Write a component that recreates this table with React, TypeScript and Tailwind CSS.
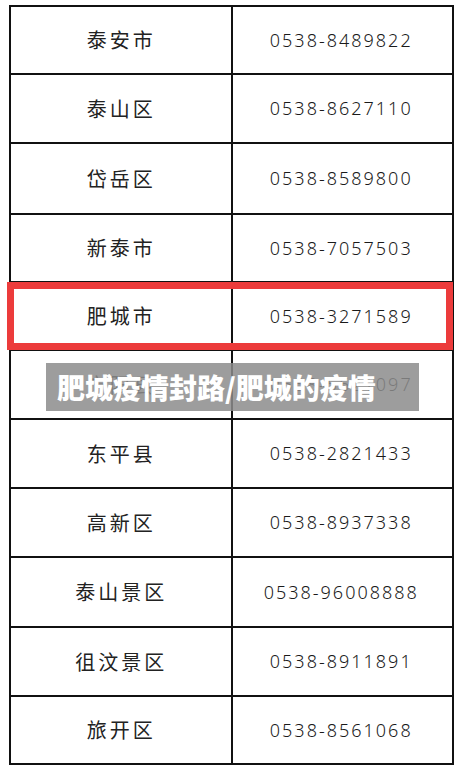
const rows: { name: string; phone: string; h: string }[] = [
  { name: '泰安市', phone: '0538-8489822', h: 'h-[68px]' },
  { name: '泰山区', phone: '0538-8627110', h: 'h-[69px]' },
  { name: '岱岳区', phone: '0538-8589800', h: 'h-[71px]' },
  { name: '新泰市', phone: '0538-7057503', h: 'h-[68px]' },
  { name: '肥城市', phone: '0538-3271589', h: 'h-[68px]' },
  { name: '宁阳县', phone: '0538-5621097', h: 'h-[69px]' },
  { name: '东平县', phone: '0538-2821433', h: 'h-[69px]' },
  { name: '高新区', phone: '0538-8937338', h: 'h-[69px]' },
  { name: '泰山景区', phone: '0538-96008888', h: 'h-[70px]' },
  { name: '徂汶景区', phone: '0538-8911891', h: 'h-[69px]' },
  { name: '旅开区', phone: '0538-8561068', h: 'h-[68px]' },
];

export default function App() {
  return (
    <div className="relative w-[466px] h-[774px] bg-white overflow-hidden font-['Noto_Sans_CJK_SC',sans-serif] text-[#222]">
      <div className="pt-[5px] pl-[9px]">
        <table className="w-[445px] border-collapse border-2 border-[#111] table-fixed">
          <tbody>
            {rows.map(r => (
              <tr key={r.name} className={r.h}>
                <td className="w-1/2 border-2 border-[#111] text-center text-[20px] tracking-[3px] pl-[1px]">{r.name}</td>
                <td className="w-1/2 border-2 border-[#111] text-center text-[18px] tracking-[2px] font-light pr-[2px] text-[#1a1a1a] font-['Noto_Sans','Noto_Sans_CJK_SC',sans-serif]">
                  {r.phone}
                </td>
              </tr>
            ))}
          </tbody>
        </table>
      </div>

      {/* red highlight around 肥城市 */}
      <div className="absolute left-[7px] top-[282px] w-[446px] h-[68px] border-[7px] border-[#ec3b3b]" />

      {/* caption banner */}
      <div className="absolute left-[46px] top-[363px] w-[373px] h-[48px] bg-[rgba(140,140,140,0.85)] flex items-center pl-[11px]">
        <span className="text-white text-[28px] font-black leading-none">肥城疫情封路/肥城的疫情</span>
      </div>
    </div>
  );
}
